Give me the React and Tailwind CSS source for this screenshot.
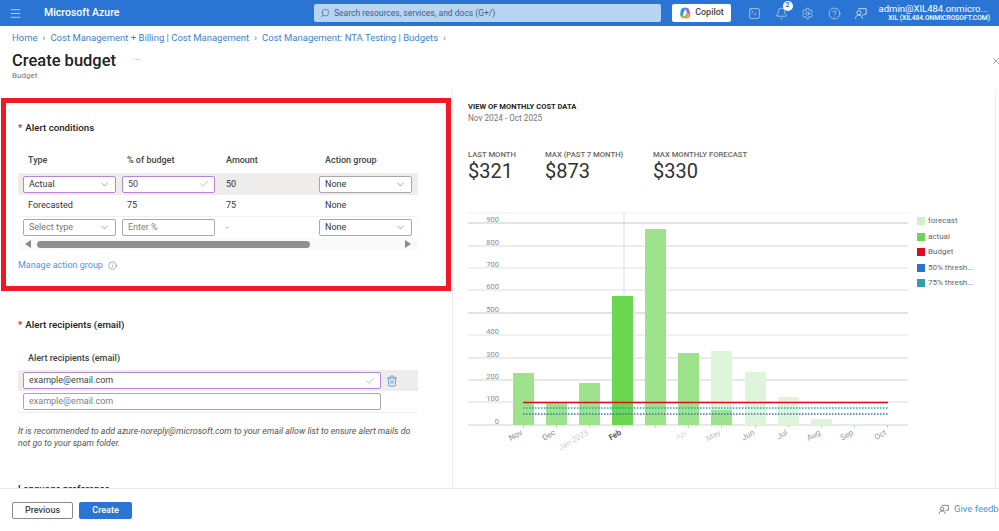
import { Bell, Check, ChevronDown, CircleHelp, Info, Menu, Search, Settings, SquareTerminal, Trash2, X } from 'lucide-react';

const FONT = "font-['Roboto','Noto_Sans',sans-serif]";

const gridLines = [
  { y: 223, label: '900', weight: 1, color: '#c8c8c8' },
  { y: 246, label: '800', weight: 1.5, color: '#e4e4e4' },
  { y: 268, label: '700', weight: 1, color: '#e2e2e2' },
  { y: 290, label: '600', weight: 1, color: '#dedede' },
  { y: 313, label: '500', weight: 1.5, color: '#dadada' },
  { y: 335, label: '400', weight: 1, color: '#e2e2e2' },
  { y: 358, label: '300', weight: 1.5, color: '#e4e4e4' },
  { y: 380, label: '200', weight: 1.5, color: '#e0e0e0' },
  { y: 402, label: '100', weight: 1.5, color: '#e6e6e6' },
  { y: 425, label: '0', weight: 1.5, color: '#e0e0e0' },
];

const months = [
  { x: 513, name: 'Nov', color: '#8e8e8e', actual: 373 },
  { x: 546, name: 'Dec', color: '#8e8e8e', actual: 403 },
  { x: 579, name: 'Jan 2025', color: '#cfcfcf', actual: 383 },
  { x: 612, name: 'Feb', color: '#555555', actual: 296, strong: true },
  { x: 645, name: '', color: '#cfcfcf', actual: 229 },
  { x: 678, name: 'Apr', color: '#e0e0e0', actual: 353 },
  { x: 711, name: 'May', color: '#c4c4c4', forecast: 351, actual: 410 },
  { x: 745, name: 'Jun', color: '#9a9a9a', forecast: 372 },
  { x: 778, name: 'Jul', color: '#9a9a9a', forecast: 397 },
  { x: 811, name: 'Aug', color: '#9a9a9a', forecast: 419 },
  { x: 844, name: 'Sep', color: '#9a9a9a', forecast: 424 },
  { x: 877, name: 'Oct', color: '#9a9a9a' },
];

const legend = [
  { name: 'forecast', className: 'bg-[#cdf2c4]' },
  { name: 'actual', className: 'bg-[#6bd650]' },
  { name: 'Budget', className: 'bg-[#e00b1c]' },
  { name: '50% thresh...', className: 'bg-[#2a75d3]' },
  { name: '75% thresh...', className: 'bg-[#339ea8]' },
];

const FeedbackIcon = ({ className }) => (
  <svg viewBox="0 0 16 16" fill="none" stroke="currentColor" strokeWidth="1" className={className}>
    <circle cx="6" cy="7" r="2.6" />
    <path d="M1.5 14.5c.4-2.8 2-4.5 4.5-4.5s4.100 1.700 4.500 4.500" />
    <path d="M5 2h10v7h-3l-2 2" />
  </svg>
);

const CopilotIcon = () => (
  <svg viewBox="0 0 16 16" className="h-[12px] w-[12px]">
    <path d="M2 6c0-3 2-5 4.500-5H9L6 8l-1 4H3.500C2 12 1 10 2 6z" fill="#2d9be8" />
    <path d="M6.500 1H10c2 0 3 1 3.500 3L15 8h-4L9 4z" fill="#8c6be8" />
    <path d="M15 8c.5 4-1.500 7-4.500 7H7l3-6 1-2z" fill="#ef6a6a" />
    <path d="M1 9l2.500 3H8l2-3-1 6H5c-2 0-3.500-3-4-6z" fill="#8fc93f" />
    <path d="M10 15l1-6h4c.3 3-1.500 6-5 6z" fill="#f2a63b" />
  </svg>
);

const TopBar = () => (
  <header className="flex h-[26px] shrink-0 items-center bg-[#2a75d3] text-white">
    <Menu className="ml-[9px] h-[13px] w-[13px] text-[#d5e5f7]" strokeWidth={1.5} />
    <span className="ml-[22px] w-[270px] text-[10.500px] font-medium">Microsoft Azure</span>
    <div className="flex h-[18px] w-[347px] items-center rounded-[2px] bg-[#b7d4f1] pl-[6px] text-[8.500px] text-[#40608a]">
      <Search className="h-[10px] w-[10px] -scale-x-100" strokeWidth={1.5} />
      <span className="ml-[4px] whitespace-nowrap">Search resources, services, and docs (G+/)</span>
    </div>
    <button className="ml-[11px] flex h-[18px] w-[59px] items-center justify-center gap-[4px] rounded-[2px] bg-white text-[9px] font-medium text-[#444444]">
      <CopilotIcon />
      Copilot
    </button>
    <div className="ml-[17px] flex items-center gap-[13.500px] text-[#dbe8f8]">
      <SquareTerminal className="h-[13px] w-[13px]" strokeWidth={1.2} />
      <div className="relative">
        <Bell className="h-[13px] w-[13px]" strokeWidth={1.2} />
        <span className="absolute -right-[5px] -top-[6px] flex h-[10px] w-[10px] items-center justify-center rounded-full bg-white text-[7px] font-bold text-[#2a75d3]">2</span>
      </div>
      <Settings className="h-[13px] w-[13px]" strokeWidth={1.2} />
      <CircleHelp className="h-[13px] w-[13px]" strokeWidth={1.2} />
      <FeedbackIcon className="h-[13px] w-[13px]" />
    </div>
    <div className="ml-[10px] w-[117px] whitespace-nowrap text-right leading-none">
      <div className="pr-[6px] text-[9.500px]">admin@XIL484.onmicro...</div>
      <div className="mt-[2px] pr-[4px] text-[6.700px] font-medium">XIL (XIL484.ONMICROSOFT.COM)</div>
    </div>
  </header>
);

const Crumb = ({ children }) => (
  <>
    <span>{children}</span>
    <span className="mx-[5px] text-[#777777]">›</span>
  </>
);

const Required = ({ children }) => (
  <div className="flex items-center text-[9.700px] font-medium leading-[14px] text-[#222222]">
    <span className="mr-[3px] text-[#d9252a]">*</span>
    {children}
  </div>
);

const Select = ({ value, placeholder, focused, width = 'w-[93px]' }) => (
  <div className={`flex h-[17px] items-center justify-between rounded-[2px] border bg-white pl-[5px] pr-[5px] text-[9px] ${width} ${focused ? 'border-[#b586d6]' : 'border-[#a8a8a8]'} ${placeholder ? 'text-[#777777]' : 'text-[#333333]'}`}>
    <span className="pt-px">{value}</span>
    <ChevronDown className="h-[11px] w-[11px] text-[#555555]" strokeWidth={1.2} />
  </div>
);

const Input = ({ value, placeholder, focused, valid, width = 'w-[93px]' }) => (
  <div className={`flex h-[17px] items-center justify-between rounded-[2px] border bg-white pl-[5px] pr-[5px] text-[9px] ${width} ${focused ? 'border-[#b586d6]' : 'border-[#a8a8a8]'} ${placeholder ? 'text-[#808080]' : 'text-[#444444]'}`}>
    <span className="pt-px">{value}</span>
    {valid && <Check className="h-[10px] w-[10px] text-[#7dbb4b]" strokeWidth={1.5} />}
  </div>
);

const AlertConditions = () => (
  <section className="mt-[7px] ml-[1px] h-[193px] w-[450px] border-[5px] border-[#ed1c24] pl-[12px] pt-[18px]">
    <Required>Alert conditions</Required>
    <div className="mt-[19px] w-[400px] text-[9px] text-[#333333]">
      <div className="grid h-[14px] grid-cols-[99px_99px_99px_1fr] items-center pl-[10px] font-medium text-[#444444]">
        <span>Type</span>
        <span>% of budget</span>
        <span>Amount</span>
        <span>Action group</span>
      </div>
      <div className="mt-[5px] flex h-[22px] items-center bg-[#eeedeb] pl-[5px]">
        <Select value="Actual" focused />
        <div className="ml-[6px]"><Input value="50" focused valid /></div>
        <span className="ml-[11px] w-[93px] pt-px">50</span>
        <Select value="None" />
      </div>
      <div className="grid h-[22px] grid-cols-[99px_99px_99px_1fr] items-center border-b border-[#f0f0f0] pl-[10px]">
        <span>Forecasted</span>
        <span>75</span>
        <span>75</span>
        <span>None</span>
      </div>
      <div className="flex h-[21px] items-center pl-[5px]">
        <Select value="Select type" placeholder />
        <div className="ml-[6px]"><Input value="Enter %" placeholder /></div>
        <span className="ml-[11px] w-[93px] text-[#777777]">-</span>
        <Select value="None" />
      </div>
      <div className="flex h-[12px] items-center bg-[#fafafa] pl-[7px] pr-[7px]">
        <span className="h-0 w-0 border-y-[4px] border-r-[6px] border-y-transparent border-r-[#8a8a8a]" />
        <span className="ml-[6px] h-[7px] w-[273px] rounded-full bg-[#8f8f8f]" />
        <span className="ml-auto h-0 w-0 border-y-[4px] border-l-[6px] border-y-transparent border-l-[#8a8a8a]" />
      </div>
    </div>
    <div className="mt-[9px] flex items-center text-[9px] text-[#4d94e6]">
      Manage action group
      <Info className="ml-[5px] h-[9px] w-[9px] text-[#666666]" strokeWidth={1.3} />
    </div>
  </section>
);

const Recipients = () => (
  <section className="mt-[27px] pl-[18px]">
    <Required>Alert recipients (email)</Required>
    <div className="mt-[19px] w-[400px]">
      <div className="pl-[10px] text-[9px] font-medium leading-[14px] text-[#444444]">Alert recipients (email)</div>
      <div className="mt-[5px] flex h-[21px] items-center bg-[#eeedeb] pl-[5px]">
        <Input value="example@email.com" focused valid width="w-[358px]" />
        <Trash2 className="ml-[5px] h-[12px] w-[12px] text-[#3f8ae0]" strokeWidth={1.5} />
      </div>
      <div className="flex h-[22px] items-center border-b border-[#f0f0f0] pl-[5px]">
        <Input value="example@email.com" placeholder width="w-[358px]" />
      </div>
    </div>
    <p className="mt-[12px] w-[400px] text-[8.800px] italic leading-[12px] text-[#555555]">
      It is recommended to add azure-noreply@microsoft.com to your email allow list to ensure alert mails do not go to your spam folder.
    </p>
    <div className="mt-[33px] text-[9.700px] font-medium text-[#222222]">Language preference</div>
  </section>
);

const Stat = ({ label, value, className }) => (
  <div className={className}>
    <div className="text-[7.700px] font-medium leading-[10px] text-[#666666]">{label}</div>
    <div className="text-[20px] leading-[22px] text-[#333333]">{value}</div>
  </div>
);

const Chart = () => (
  <svg width="440" height="260" viewBox="468 208 440 260" className="shrink-0">
    <line x1="468" x2="908" y1="213" y2="213" stroke="#eeeeee" />
    <line x1="624" x2="624" y1="213" y2="296" stroke="#dddddd" />
    {gridLines.map((line) => (
      <g key={line.label}>
        <line x1="468" x2="908" y1={line.y} y2={line.y} stroke={line.color} strokeWidth={line.weight} />
        <text x="499" y={line.y - 1} textAnchor="end" fontSize="7.500" fill="#8a8a8a" fontFamily="Roboto">{line.label}</text>
      </g>
    ))}
    {months.map((month) => (
      <g key={month.x}>
        {month.forecast && <rect x={month.x} y={month.forecast} width="21" height={425 - month.forecast} fill="#dff5d9" />}
        {month.actual && (
          <rect x={month.x} y={month.actual} width="21" height={425 - month.actual} fill={month.strong ? '#6bd650' : '#9ee38c'} />
        )}
        <line x1={month.x + 10.500} x2={month.x + 10.500} y1="425" y2="428" stroke="#cccccc" />
        <text
          x={month.x + 10}
          y="434"
          textAnchor="end"
          fontSize="8"
          fontWeight={month.strong ? 600 : 400}
          fill={month.color}
          fontFamily="Roboto"
          transform={`rotate(-30 ${month.x + 10} 434)`}
        >
          {month.name}
        </text>
      </g>
    ))}
    <line x1="523" x2="888" y1="402.500" y2="402.500" stroke="#e00b1c" strokeWidth="1.300" />
    <line x1="523" x2="888" y1="408" y2="408" stroke="#1fa8b0" strokeWidth="1.500" strokeDasharray="1.500 1.500" />
    <line x1="523" x2="888" y1="414" y2="414" stroke="#2a75d3" strokeWidth="1.500" strokeDasharray="1.500 1.500" />
  </svg>
);

const CostPanel = () => (
  <aside className="mr-[3px] flex-1 overflow-hidden border-x border-x-[#eeeeee] pl-[15px] pt-[10px]">
    <div className="text-[7.600px] font-bold leading-[11px] text-[#222222]">VIEW OF MONTHLY COST DATA</div>
    <div className="text-[8.200px] leading-[12px] text-[#777777]">Nov 2024 - Oct 2025</div>
    <div className="mt-[26px] flex">
      <Stat label="LAST MONTH" value="$321" className="w-[77px]" />
      <Stat label="MAX (PAST 7 MONTH)" value="$873" className="w-[108px]" />
      <Stat label="MAX MONTHLY FORECAST" value="$330" />
    </div>
    <div className="mt-[26px] flex">
      <Chart />
      <ul className="ml-[9px] mt-[8px] flex flex-col gap-[5px] text-[8px] leading-[10.500px] text-[#666666]">
        {legend.map((item) => (
          <li key={item.name} className="flex items-center gap-[2px] whitespace-nowrap">
            <span className={`mr-[1px] h-[8px] w-[8px] ${item.className}`} />
            {item.name}
          </li>
        ))}
      </ul>
    </div>
  </aside>
);

export default function App() {
  return (
    <div className={`flex h-[531px] w-[999px] flex-col overflow-hidden bg-white ${FONT}`}>
      <TopBar />
      <nav className="flex h-[24px] shrink-0 items-center whitespace-nowrap pl-[12px] text-[9.500px] text-[#3f82d6]">
        <Crumb>Home</Crumb>
        <Crumb>Cost Management + Billing | Cost Management</Crumb>
        <Crumb>Cost Management: NTA Testing | Budgets</Crumb>
      </nav>
      <div className="h-[41px] shrink-0 pl-[12px]">
        <div className="flex items-center">
          <h1 className="text-[16.500px] font-medium leading-[21px] text-[#222222]">Create budget</h1>
          <span className="ml-[17px] text-[9px] text-[#777777]">···</span>
          <X className="ml-auto -mr-[2px] h-[10px] w-[10px] text-[#555555]" strokeWidth={1.2} />
        </div>
        <div className="text-[8px] leading-[10px] text-[#777777]">Budget</div>
      </div>
      <main className="flex min-h-0 flex-1">
        <div className="w-[452px] shrink-0 overflow-hidden">
          <AlertConditions />
          <Recipients />
        </div>
        <CostPanel />
      </main>
      <footer className="flex h-[43px] shrink-0 items-start border-t border-[#e8e8e8] pl-[12px] pt-[13px]">
        <button className="h-[17px] w-[61px] rounded-[2px] border border-[#8a8a8a] text-[9px] font-medium text-[#444444]">Previous</button>
        <button className="ml-[6px] h-[17px] w-[53px] rounded-[2px] bg-[#2a75d3] text-[9px] font-medium text-white">Create</button>
        <div className="ml-auto flex w-[61px] items-center overflow-hidden whitespace-nowrap text-[9.500px] text-[#4d94e6]">
          <FeedbackIcon className="mr-[5px] h-[11px] w-[11px] shrink-0 text-[#555555]" />
          Give feedback
        </div>
      </footer>
    </div>
  );
}
